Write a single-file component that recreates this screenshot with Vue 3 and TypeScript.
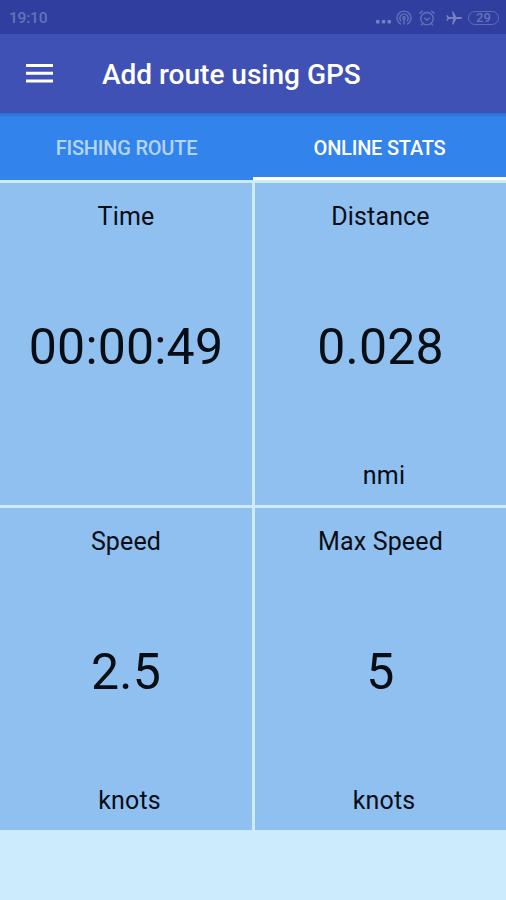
<script setup lang="ts">
import { ref } from 'vue'

interface Stat {
  label: string
  value: string
  unit: string
}

const tabs: string[] = ['FISHING ROUTE', 'ONLINE STATS']
const activeTab = ref(1)

const stats: Stat[] = [
  { label: 'Time', value: '00:00:49', unit: '' },
  { label: 'Distance', value: '0.028', unit: 'nmi' },
  { label: 'Speed', value: '2.5', unit: 'knots' },
  { label: 'Max Speed', value: '5', unit: 'knots' },
]
</script>

<template>
  <div class="screen">
    <div class="status-bar">
      <span class="clock">19:10</span>
      <div class="status-icons">
        <svg class="dots" width="17" height="18" viewBox="0 0 17 18">
          <rect x="1" y="11" width="3.5" height="3.5" rx="0.8" />
          <rect x="6.8" y="11" width="3.5" height="3.5" rx="0.8" />
          <rect x="12.5" y="11" width="3.5" height="3.5" rx="0.8" />
        </svg>
        <svg class="hotspot" width="16" height="18" viewBox="0 0 16 18">
          <path d="M5 15.4a7 7 0 1 1 6 0" />
          <path d="M5.2 12.2a4.2 4.2 0 1 1 5.6 0" />
          <circle cx="8" cy="9" r="1.2" />
          <path d="M8 9.5v6" />
        </svg>
        <svg class="alarm" width="18" height="18" viewBox="0 0 18 18">
          <circle cx="9" cy="9.7" r="6.2" />
          <path d="M6.3 8.8L9 11.2l2.8-2.5M1.5 4.6l3.2-2.8M16.5 4.6l-3.2-2.8M4.7 14.5l-1.5 1.7M13.3 14.5l1.5 1.7" />
        </svg>
        <svg class="plane" width="18" height="18" viewBox="0 0 18 18">
          <path d="M17 9c0-.8-.6-1.1-1.4-1.1h-4.3L8.4 2.4H7l1.2 5.5H4L2.6 6.2H1.3L2.2 9l-.9 2.8h1.3L4 10.1h4.2L7 15.6h1.4l2.9-5.5h4.3c.8 0 1.4-.3 1.4-1.1z" />
        </svg>
        <span class="battery">29</span>
      </div>
    </div>

    <header class="app-bar">
      <svg class="menu" width="27" height="20" viewBox="0 0 27 20">
        <path d="M0 1.5h27M0 9.3h27M0 17h27" />
      </svg>
      <h1 class="title">Add route using GPS</h1>
    </header>

    <nav class="tabs">
      <button
        v-for="(tab, i) in tabs"
        :key="tab"
        class="tab"
        :class="{ active: i === activeTab }"
        @click="activeTab = i"
      >
        {{ tab }}
      </button>
    </nav>

    <main class="grid">
      <section v-for="stat in stats" :key="stat.label" class="cell">
        <span class="label">{{ stat.label }}</span>
        <span class="value">{{ stat.value }}</span>
        <span class="unit">{{ stat.unit }}</span>
      </section>
    </main>
  </div>
</template>

<style>
body {
  margin: 0;
  background: #ccecfd;
}
</style>

<style scoped>
.screen {
  display: flex;
  flex-direction: column;
  height: 900px;
  background: #ccecfd;
  font-family: Roboto, 'Liberation Sans', sans-serif;
  overflow: hidden;
}

.status-bar {
  display: flex;
  align-items: center;
  justify-content: space-between;
  box-sizing: border-box;
  height: 34px;
  padding: 1px 7px 0 9px;
  background: #303f9f;
  color: #6673b9;
}

.clock {
  font-size: 15.5px;
  font-weight: 500;
  letter-spacing: -0.2px;
  line-height: 34px;
}

.status-icons {
  display: flex;
  align-items: center;
}

.status-icons svg {
  fill: none;
  stroke: #6471b8;
  stroke-width: 1.4;
}

.status-icons .dots,
.status-icons .plane {
  fill: #7481c4;
  stroke: none;
}

.hotspot {
  margin-left: 4px;
}

.alarm {
  margin-left: 6px;
}

.plane {
  margin-left: 9px;
}

.battery {
  box-sizing: border-box;
  width: 31px;
  height: 14px;
  margin-left: 5px;
  border: 1.5px solid #5f6cb5;
  border-radius: 7px;
  font-size: 13px;
  font-weight: 500;
  line-height: 12px;
  text-align: center;
}

.app-bar {
  display: flex;
  align-items: center;
  height: 79px;
  padding-left: 26px;
  background: #3f51b5;
}

.menu {
  fill: none;
  stroke: #fff;
  stroke-width: 3;
}

.title {
  margin: 2px 0 0 49px;
  color: #fff;
  font-size: 28px;
  font-weight: 500;
  line-height: 40px;
  white-space: nowrap;
}

.tabs {
  display: grid;
  grid-template-columns: 1fr 1fr;
  height: 67px;
  background: linear-gradient(#2e6fd0, #3284ec 5px);
}

.tab {
  box-sizing: border-box;
  margin: 0;
  padding: 5px 0 0;
  border: 0;
  border-bottom: 3px solid transparent;
  background: none;
  color: #b4d4f9;
  font: 500 20px/40px Roboto, 'Liberation Sans', sans-serif;
  letter-spacing: -0.22px;
}

.tab.active {
  border-bottom-color: #fff;
  color: #fff;
}

.grid {
  display: grid;
  grid-template-columns: 252px 251px;
  grid-template-rows: 322px 322px;
  gap: 3px;
  padding-top: 3px;
}

.cell {
  display: flex;
  flex-direction: column;
  align-items: center;
  justify-content: space-between;
  box-sizing: border-box;
  padding: 17px 0 12px;
  background: #90c0f0;
  color: #060d14;
}

.label,
.unit {
  height: 34px;
  font-size: 25px;
  letter-spacing: 0.15px;
  line-height: 34px;
}

.value {
  font-size: 50px;
  letter-spacing: 0.2px;
  line-height: 60px;
}

.unit {
  padding-left: 7px;
}
</style>
